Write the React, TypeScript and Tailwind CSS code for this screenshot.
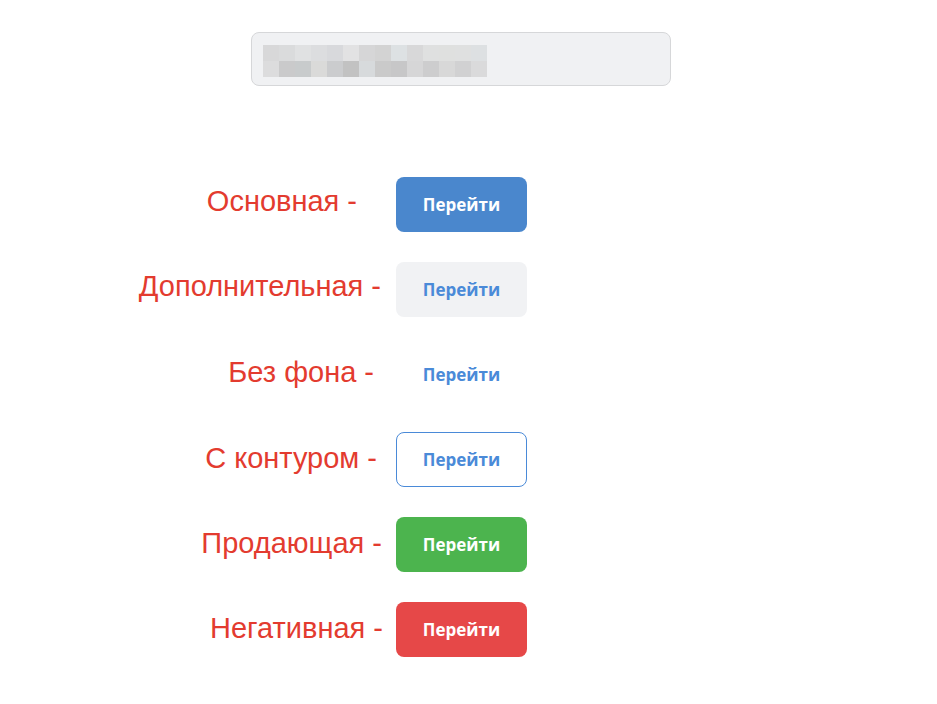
import React from 'react';

// pixelated placeholder blocks inside the top field
const blurRows: string[][] = [
  ['#d8d8d9', '#dadbdc', '#e0e1e2', '#dcdddf', '#d8d9dc', '#e2e2e3', '#d6d6d7', '#d3d3d3', '#dde1e3', '#d8d8d9', '#dfe0e0', '#dfe0df', '#dfe0e0', '#dde0e2'],
  ['#dcdcdd', '#cacacb', '#c8cbcc', '#dadad9', '#cbccce', '#c2c2c2', '#d7dadc', '#cacaca', '#c7c7c8', '#d6d6d7', '#cdcdce', '#d8d8d8', '#d1d1d2', '#dadadb'],
];

const rows = [
  { label: 'Основная -', pad: 'pr-[26px] -translate-y-[3px]', btn: 'bg-[#4a87cd] text-white' },
  { label: 'Дополнительная -', pad: 'pr-[2px] -translate-y-[3px]', btn: 'bg-[#f1f2f4] text-[#4a8ad8]' },
  { label: 'Без фона -', pad: 'pr-[9px] -translate-y-[2px]', btn: 'bg-transparent text-[#4a8ad8]' },
  { label: 'С контуром -', pad: 'pr-[6px] -translate-y-[1px]', btn: 'bg-white text-[#4a8ad8] border border-[#4a8ad8]' },
  { label: 'Продающая -', pad: 'pr-[1px] -translate-y-[1px]', btn: 'bg-[#4cb44e] text-white' },
  { label: 'Негативная -', pad: 'pr-0 -translate-y-[1px]', btn: 'bg-[#e64848] text-white' },
];

export default function App() {
  return (
    <div className="min-h-[704px] bg-white pt-[32px]">
      {/* top field */}
      <div className="ml-[251px] flex h-[54px] w-[420px] items-start rounded-lg border border-[#d6d7d9] bg-[#f0f1f3] pl-[11px] pt-[12px]">
        <div className="flex flex-col">
          {blurRows.map((r, i) => (
            <div key={i} className="flex">
              {r.map((c, j) => (
                <div key={j} className="h-[16px] w-[16px]" style={{ backgroundColor: c }} />
              ))}
            </div>
          ))}
        </div>
      </div>

      {/* button variants */}
      <div className="mt-[91px] flex flex-col gap-[30px]">
        {rows.map((row) => (
          <div key={row.label} className="flex items-center">
            <div
              className={`w-[383px] text-right text-[29px] leading-none text-[#e33b2f] ${row.pad}`}
              style={{ fontFamily: '"Liberation Sans", Arial, sans-serif' }}
            >
              {row.label}
            </div>
            <button
              className={`ml-[13px] flex h-[55px] w-[131px] items-center justify-center rounded-lg text-[17px] font-bold ${row.btn}`}
              style={{ fontFamily: '"Open Sans", sans-serif' }}
            >
              Перейти
            </button>
          </div>
        ))}
      </div>
    </div>
  );
}
